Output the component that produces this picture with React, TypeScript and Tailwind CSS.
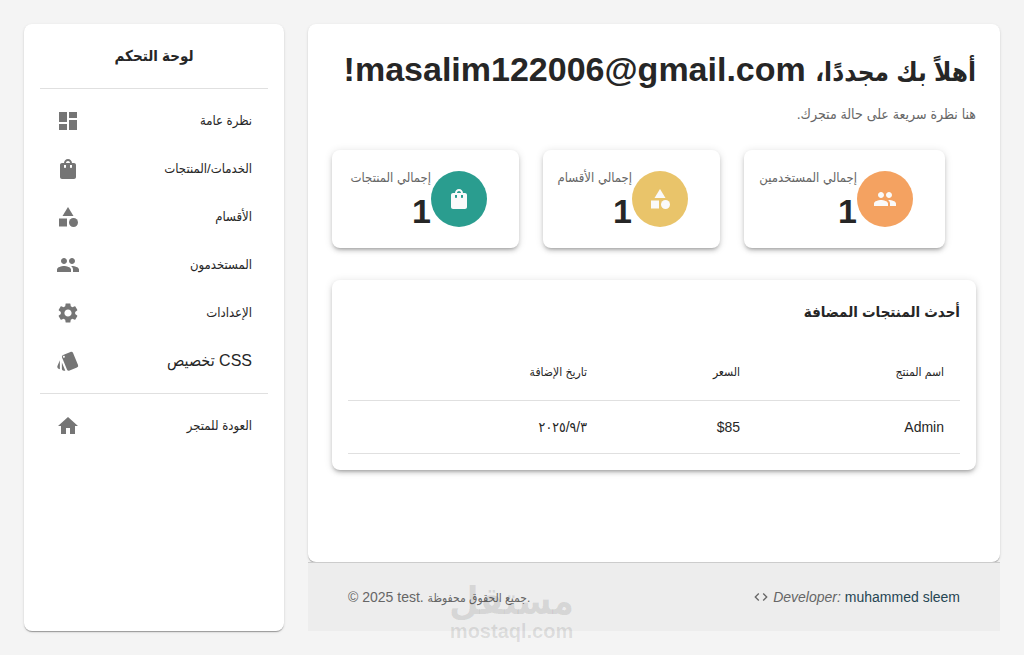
import React from 'react';
import {
  MdCategory,
  MdCode,
  MdDashboard,
  MdHome,
  MdPeople,
  MdSettings,
  MdShoppingBag,
  MdStyle,
} from 'react-icons/md';

const navItems = [
  { label: 'نظرة عامة', icon: MdDashboard },
  { label: 'الخدمات/المنتجات', icon: MdShoppingBag },
  { label: 'الأقسام', icon: MdCategory },
  { label: 'المستخدمون', icon: MdPeople },
  { label: 'الإعدادات', icon: MdSettings },
  { label: 'تخصيص CSS', icon: MdStyle, size: 'text-base' },
];

const stats = [
  { label: 'إجمالي المستخدمين', value: 1, icon: MdPeople, color: 'bg-[#f4a261]', width: 'w-[97px]' },
  { label: 'إجمالي الأقسام', value: 1, icon: MdCategory, color: 'bg-[#e9c46a]', width: 'w-[73px]' },
  { label: 'إجمالي المنتجات', value: 1, icon: MdShoppingBag, color: 'bg-[#2a9d8f]', width: 'w-[83px]' },
];

const products = [{ name: 'Admin', price: '$85', date: '٢٠٢٥/٩/٣' }];

const paper =
  'rounded-lg bg-white shadow-[0_2px_1px_-1px_rgba(0,0,0,0.2),0_1px_1px_0_rgba(0,0,0,0.14),0_1px_3px_0_rgba(0,0,0,0.12)]';
const card =
  'rounded-lg bg-white shadow-[0_3px_3px_-2px_rgba(0,0,0,0.2),0_3px_4px_0_rgba(0,0,0,0.14),0_1px_8px_0_rgba(0,0,0,0.12)]';

type NavLinkProps = { label: string; icon: React.ElementType; size?: string };

const NavLink: React.FC<NavLinkProps> = ({ label, icon: Icon, size = 'text-[13px]' }) => (
  <a href="#" className="flex h-12 items-center justify-between px-4 hover:bg-black/5">
    <Icon className="size-6 text-[#757575]" />
    <span className={size}>{label}</span>
  </a>
);

const Sidebar: React.FC = () => (
  <aside className={`w-[260px] shrink-0 p-4 ${paper}`}>
    <h2 className="mb-4 text-center text-[15px] leading-8 font-bold">لوحة التحكم</h2>
    <nav className="border-t border-[#e0e0e0] pt-2">
      {navItems.map((item) => (
        <NavLink key={item.label} {...item} />
      ))}
      <hr className="my-2 border-[#e0e0e0]" />
      <NavLink label="العودة للمتجر" icon={MdHome} />
    </nav>
  </aside>
);

const Stats: React.FC = () => (
  <section className="mt-6 flex flex-wrap justify-end gap-6">
    {stats.map(({ label, value, icon: Icon, color, width }) => (
      <div key={label} className={`flex items-center py-4 pr-8 pl-4 ${card}`}>
        <div className={`flex size-14 items-center justify-center rounded-full ${color}`}>
          <Icon className="size-6 text-[#fafafa]" />
        </div>
        <div className={width}>
          <p className="text-[13px] leading-6 whitespace-nowrap text-[#666]">{label}</p>
          <p className="text-[34px] leading-[42px] font-bold">{value}</p>
        </div>
      </div>
    ))}
  </section>
);

const LatestProducts: React.FC = () => (
  <section className={`mt-8 p-4 ${card}`}>
    <h2 className="mb-4 text-[15px] leading-8 font-bold">أحدث المنتجات المضافة</h2>
    <table className="w-full table-fixed text-right text-sm">
      <thead>
        <tr className="border-b border-[#e0e0e0] text-xs leading-6">
          <th className="w-1/3 p-4 font-normal">اسم المنتج</th>
          <th className="w-1/4 p-4 font-normal">السعر</th>
          <th className="p-4 font-normal">تاريخ الإضافة</th>
        </tr>
      </thead>
      <tbody>
        {products.map((product) => (
          <tr key={product.name} className="border-b border-[#e0e0e0]">
            <td className="p-4">{product.name}</td>
            <td className="p-4">{product.price}</td>
            <td className="p-4">{product.date}</td>
          </tr>
        ))}
      </tbody>
    </table>
  </section>
);

const Footer: React.FC = () => (
  <footer className="relative border-t border-[#cccccc] bg-[#ededed] px-10 py-6 text-sm text-[#666]">
    <div className="flex items-center justify-between">
      <p>
        © 2025 test. <span className="text-xs">جميع الحقوق محفوظة.</span>
      </p>
      <p className="flex items-center gap-1">
        <MdCode className="size-4" />
        <em>Developer:</em>
        <a href="#" className="text-[#264653]">
          muhammed sleem
        </a>
      </p>
    </div>
    {/* Watermark */}
    <div className="pointer-events-none absolute top-4 left-[141px] text-center font-bold text-black/10">
      <p className="text-[38px] leading-11">مستقل</p>
      <p className="text-xl leading-4">mostaql.com</p>
    </div>
  </footer>
);

export default function App() {
  return (
    <div className="flex min-h-screen gap-6 bg-[#f4f4f4] p-6 font-['Liberation_Sans','DejaVu_Sans_Condensed','DejaVu_Sans',sans-serif] text-[#262626]">
      <Sidebar />
      <div className="flex min-w-0 flex-1 flex-col">
        <main dir="rtl" className={`flex-1 p-6 ${paper}`}>
          <h1 className="mb-3 text-[34px] leading-[42px] font-bold">
            <span className="text-[26px] leading-8">أهلاً بك مجددًا،</span> masalim122006@gmail.com!
          </h1>
          <p className="text-sm leading-6 text-[#666]">هنا نظرة سريعة على حالة متجرك.</p>
          <Stats />
          <LatestProducts />
        </main>
        <Footer />
      </div>
    </div>
  );
}
